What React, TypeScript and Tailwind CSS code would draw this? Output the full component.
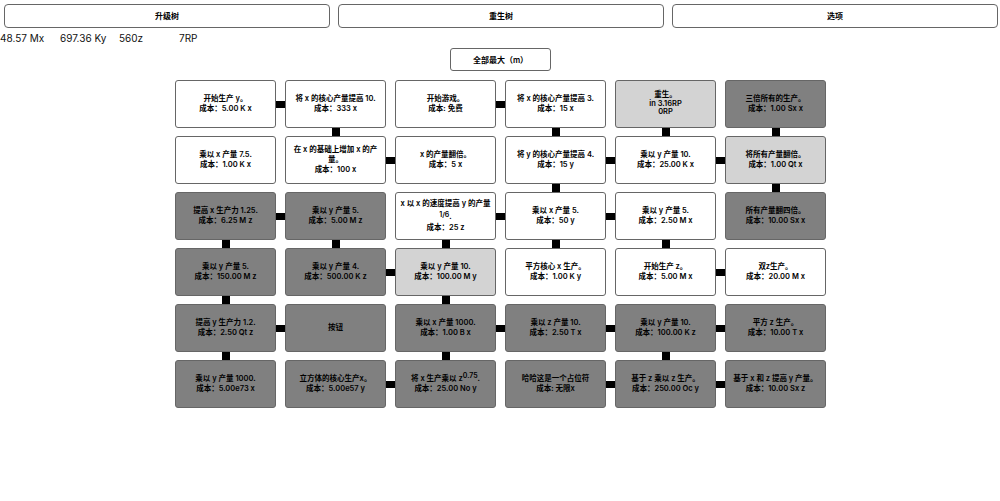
import React from "react";

type Cell = { lines: React.ReactNode[]; tone: "w" | "l" | "d"; tight?: boolean };

const cells: Cell[][] = [
  [
    { lines: ["开始生产 y。", "成本：5.00 K x"], tone: "w" },
    { lines: ["将 x 的核心产量提高 10.", "成本：333 x"], tone: "w" },
    { lines: ["开始游戏。", "成本: 免费"], tone: "w" },
    { lines: ["将 x 的核心产量提高 3.", "成本：15 x"], tone: "w" },
    { lines: ["重生。", "in 3.16RP", "0RP"], tone: "l", tight: true },
    { lines: ["三倍所有的生产。", "成本：1.00 Sx x"], tone: "d" },
  ],
  [
    { lines: ["乘以 x 产量 7.5.", "成本：1.00 K x"], tone: "w" },
    { lines: ["在 x 的基础上增加 x 的产", "量。", "成本：100 x"], tone: "w" },
    { lines: ["x 的产量翻倍。", "成本：5 x"], tone: "w" },
    { lines: ["将 y 的核心产量提高 4.", "成本：15 y"], tone: "w" },
    { lines: ["乘以 y 产量 10.", "成本：25.00 K x"], tone: "w" },
    { lines: ["将所有产量翻倍。", "成本：1.00 Qt x"], tone: "l" },
  ],
  [
    { lines: ["提高 x 生产力 1.25.", "成本：6.25 M z"], tone: "d" },
    { lines: ["乘以 y 产量 5.", "成本：5.00 M z"], tone: "d" },
    {
      lines: [
        "x 以 x 的速度提高 y 的产量",
        <span className="inline-block pt-[1px] leading-[13px]">
          <span className="relative top-[-2px] text-[7px]">1/6</span>.
        </span>,
        "成本：25 z",
      ],
      tone: "w",
    },
    { lines: ["乘以 x 产量 5.", "成本：50 y"], tone: "w" },
    { lines: ["乘以 y 产量 5.", "成本：2.50 M x"], tone: "w" },
    { lines: ["所有产量翻四倍。", "成本：10.00 Sx x"], tone: "d" },
  ],
  [
    { lines: ["乘以 y 产量 5.", "成本：150.00 M z"], tone: "d" },
    { lines: ["乘以 y 产量 4.", "成本：500.00 K z"], tone: "d" },
    { lines: ["乘以 y 产量 10.", "成本：100.00 M y"], tone: "l" },
    { lines: ["平方核心 x 生产。", "成本：1.00 K y"], tone: "w" },
    { lines: ["开始生产 z。", "成本：5.00 M x"], tone: "w" },
    { lines: ["双z生产。", "成本：20.00 M x"], tone: "w" },
  ],
  [
    { lines: ["提高 y 生产力 1.2.", "成本：2.50 Qt z"], tone: "d" },
    { lines: ["按钮"], tone: "d" },
    { lines: ["乘以 x 产量 1000.", "成本：1.00 B x"], tone: "d" },
    { lines: ["乘以 z 产量 10.", "成本：2.50 T x"], tone: "d" },
    { lines: ["乘以 y 产量 10.", "成本：100.00 K z"], tone: "d" },
    { lines: ["平方 z 生产。", "成本：10.00 T x"], tone: "d" },
  ],
  [
    { lines: ["乘以 y 产量 1000.", "成本：5.00e73 x"], tone: "d" },
    { lines: ["立方体的核心生产x。", "成本：5.00e57 y"], tone: "d" },
    {
      lines: [
        <>
          将 x 生产乘以 z<sup className="text-[7px]">0.75</sup>.
        </>,
        "成本：25.00 No y",
      ],
      tone: "d",
    },
    { lines: ["哈哈这是一个占位符", "成本: 无限x"], tone: "d" },
    { lines: ["基于 z 乘以 z 生产。", "成本：250.00 Oc y"], tone: "d" },
    { lines: ["基于 x 和 z 提高 y 产量。", "成本：10.00 Sx z"], tone: "d" },
  ],
];

// horizontal links: row r, between col c and c+1
const hLinks = [
  [1, 0, 1, 0, 0],
  [0, 1, 0, 1, 1],
  [1, 0, 1, 1, 0],
  [0, 1, 0, 0, 1],
  [1, 0, 1, 1, 1],
  [0, 1, 0, 1, 1],
];

// vertical links: between row r and r+1, col c
const vLinks = [
  [0, 1, 0, 1, 1, 1],
  [0, 0, 0, 1, 0, 1],
  [1, 1, 1, 1, 1, 0],
  [1, 0, 1, 0, 0, 0],
  [1, 0, 1, 0, 1, 0],
];

const toneClass = {
  w: "bg-white",
  l: "bg-[#d3d3d3]",
  d: "bg-[#808080]",
};

function UpgradeCell({ cell }: { cell: Cell }) {
  return (
    <div
      className={`flex flex-col items-center justify-center rounded-[3px] border border-[#666] text-center text-[7.5px] font-semibold text-black ${
        cell.tight ? "leading-[8.5px]" : "leading-[10px]"
      } ${toneClass[cell.tone]}`}
    >
      {cell.lines.map((l, i) => (
        <div key={i} className="whitespace-nowrap">
          {l}
        </div>
      ))}
    </div>
  );
}

export default function App() {
  const grid: React.ReactNode[] = [];
  for (let r = 0; r < 6; r++) {
    for (let c = 0; c < 6; c++) {
      grid.push(<UpgradeCell key={`c${r}-${c}`} cell={cells[r][c]} />);
      if (c < 5)
        grid.push(
          <div key={`h${r}-${c}`} className="flex items-center">
            {hLinks[r][c] ? <div className="h-[7px] w-full bg-black" /> : null}
          </div>
        );
    }
    if (r < 5) {
      for (let c = 0; c < 6; c++) {
        grid.push(
          <div key={`v${r}-${c}`} className="flex justify-center">
            {vLinks[r][c] ? <div className="h-full w-[8px] bg-black" /> : null}
          </div>
        );
        if (c < 5) grid.push(<div key={`g${r}-${c}`} />);
      }
    }
  }

  return (
    <div
      className="h-[501px] w-[1000px] overflow-hidden bg-white text-black"
      style={{ fontFamily: 'Inter, "Noto Sans CJK SC", sans-serif' }}
    >
      {/* Tabs */}
      <div className="flex gap-[8px] pl-[4px] pt-[4px]">
        {["升级树", "重生树", "选项"].map((t) => (
          <button
            key={t}
            className="h-[24px] w-[326px] rounded-[4px] border border-[#666] bg-white text-[8px] font-semibold"
          >
            {t}
          </button>
        ))}
      </div>

      {/* Resources */}
      <div className="mt-[2px] flex h-[15px] items-center text-[10px] leading-[14px] text-[#111]">
        <span className="w-[60px]">48.57 Mx</span>
        <span className="w-[59px]">697.36 Ky</span>
        <span className="w-[60px]">560z</span>
        <span>7RP</span>
      </div>

      <div className="mt-[3px] flex justify-center">
        <button className="ml-[1px] h-[23px] w-[101px] rounded-[3px] border border-[#666] bg-white text-[8px] font-semibold">
          全部最大（m）
        </button>
      </div>

      {/* Upgrade tree */}
      <div className="mt-[9px] flex justify-center">
        <div className="ml-[1px] grid grid-cols-[101px_9px_101px_9px_101px_9px_101px_9px_101px_9px_101px] grid-rows-[48px_8px_48px_8px_48px_8px_48px_8px_48px_8px_48px]">
          {grid}
        </div>
      </div>
    </div>
  );
}
